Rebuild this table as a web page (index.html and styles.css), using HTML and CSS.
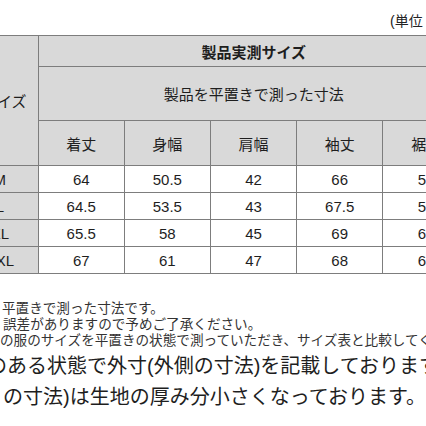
FILE: index.html
```html
<!DOCTYPE html>
<html lang="ja">
<head>
<meta charset="utf-8">
<link rel="stylesheet" href="styles.css">
</head>
<body>
<div class="unit">(単位：cm)</div>
<table class="size-table">
  <colgroup>
    <col class="col-size">
    <col class="col-data"><col class="col-data"><col class="col-data"><col class="col-data"><col class="col-data">
  </colgroup>
  <tr class="r-title">
    <th rowspan="3" class="size-head">サイズ</th>
    <th colspan="5" class="title">製品実測サイズ</th>
  </tr>
  <tr class="r-sub">
    <th colspan="5" class="sub">製品を平置きで測った寸法</th>
  </tr>
  <tr class="r-cols">
    <th>着丈</th><th>身幅</th><th>肩幅</th><th>袖丈</th><th>裾幅</th>
  </tr>
  <tr class="r-data"><th class="size">M</th><td>64</td><td>50.5</td><td>42</td><td>66</td><td>53</td></tr>
  <tr class="r-data"><th class="size">L</th><td>64.5</td><td>53.5</td><td>43</td><td>67.5</td><td>56</td></tr>
  <tr class="r-data"><th class="size">XL</th><td>65.5</td><td>58</td><td>45</td><td>69</td><td>61</td></tr>
  <tr class="r-data"><th class="size">XXL</th><td>67</td><td>61</td><td>47</td><td>68</td><td>64</td></tr>
</table>
<div class="notes">
  <div class="note n1">平置きで測った寸法です。</div>
  <div class="note n2">誤差がありますので予めご了承ください。</div>
  <div class="note n3">の服のサイズを平置きの状態で測っていただき、サイズ表と比較してください。</div>
</div>
<div class="big">
  <div class="big-line b1">のある状態で外寸(外側の寸法)を記載しております。</div>
  <div class="big-line b2">の寸法)は生地の厚み分小さくなっております。</div>
</div>
</body>
</html>
```
FILE: styles.css
```css
html, body {
  margin: 0;
  padding: 0;
  background: #ffffff;
  overflow: hidden;
}
body {
  font-family: "Liberation Sans", "Noto Sans CJK JP", sans-serif;
  color: #222;
  width: 426px;
  height: 426px;
}
.unit {
  padding-top: 11px;
  padding-left: 390px;
  font-size: 14px;
  line-height: 20px;
  height: 20px;
  white-space: nowrap;
  color: #222;
}
.size-table {
  margin-top: 4px;
  margin-left: -38px;
  border-collapse: collapse;
  table-layout: fixed;
  width: 507px;
  font-size: 15px;
  color: #1e1e1e;
}
.col-size { width: 76px; }
.col-data { width: 86px; }
.size-table th,
.size-table td {
  border: 1px solid #7d7d7d;
  padding: 0;
  text-align: center;
  font-weight: normal;
  white-space: nowrap;
  overflow: hidden;
}
.size-table th { background: #d9d9d9; }
.size-table td { background: #ffffff; }
.size-table tr > :first-child { border-left: none; }
.size-table tr > :last-child { border-right: none; }
.size-head { padding-left: 9px !important; }
.title { font-weight: bold !important; }
.r-title th { height: 30px; }
.r-sub th { height: 53px; }
.r-cols th { height: 44px; }
.r-data th, .r-data td { height: 26px; }
.notes {
  margin-top: 27px;
  font-size: 13.6px;
  line-height: 16px;
  color: #333;
  white-space: nowrap;
}
.n1 { margin-left: 2px; }
.n2 { margin-left: 3px; }
.n3 { margin-left: 0; }
.big {
  margin-top: 2px;
  font-size: 20px;
  line-height: 31px;
  color: #1e1e1e;
  white-space: nowrap;
}
.b1 { margin-left: -13px; }
.b2 { margin-left: 3px; }
```
